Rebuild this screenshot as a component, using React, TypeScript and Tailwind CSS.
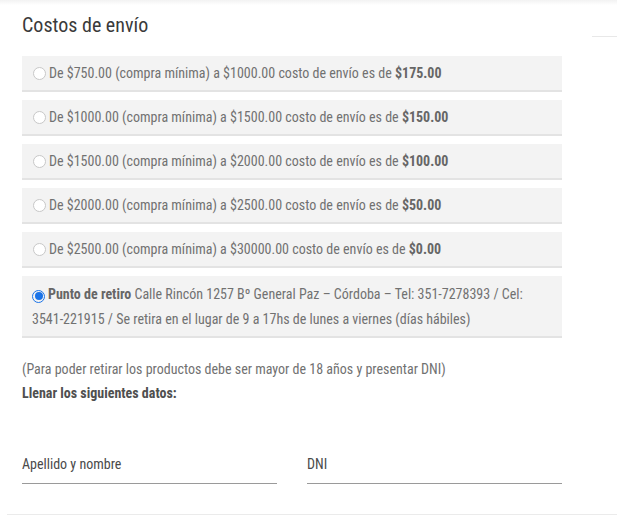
const opciones = [
  { desde: "$750.00", hasta: "$1000.00", costo: "$175.00" },
  { desde: "$1000.00", hasta: "$1500.00", costo: "$150.00" },
  { desde: "$1500.00", hasta: "$2000.00", costo: "$100.00" },
  { desde: "$2000.00", hasta: "$2500.00", costo: "$50.00" },
  { desde: "$2500.00", hasta: "$30000.00", costo: "$0.00" },
];

function Radio({ checked }: { checked?: boolean }) {
  if (checked) {
    return (
      <span className="inline-flex items-center justify-center w-[13px] h-[13px] rounded-full border-[1.5px] border-[#1a73e8] align-[-1px] mr-[3px]">
        <span className="w-[8px] h-[8px] rounded-full bg-[#1a73e8]" />
      </span>
    );
  }
  return (
    <span className="inline-block w-[13px] h-[13px] rounded-full border border-[#c8c8c8] bg-white align-[-1px] mr-[3px]" />
  );
}

export default function App() {
  return (
    <div
      className="relative w-[617px] h-[518px] bg-white text-[#717171] overflow-hidden"
      style={{ fontFamily: "'Roboto Condensed', Roboto, sans-serif" }}
    >
      <div className="absolute inset-x-0 top-0 h-[5px] bg-gradient-to-b from-[#f2f2f2] to-white" />
      <div className="flex">
        <div className="w-[592px] pl-[22px] pr-[30px]">
          <h3 className="text-[20px] leading-[24px] text-[#3a3a3a] pt-[13px]">Costos de envío</h3>
          <div className="mt-[19px] flex flex-col gap-[8px]">
            {opciones.map((o) => (
              <label
                key={o.desde}
                className="flex items-center h-[36px] pl-[11px] bg-[#f3f3f3] border-b-2 border-[#e3e3e3] text-[14px]"
              >
                <Radio />
                <span>
                  De {o.desde} (compra mínima) a {o.hasta} costo de envío es de{" "}
                  <b className="font-bold text-[#666]">{o.costo}</b>
                </span>
              </label>
            ))}
            <label className="block pl-[10px] pr-[8px] pt-[6px] pb-[4px] bg-[#f3f3f3] border-b-2 border-[#e3e3e3] text-[14px] leading-[25px]">
              <Radio checked />
              <b className="font-bold text-[#666]">Punto de retiro</b> Calle Rincón 1257 Bº General Paz – Córdoba – Tel:
              351-7278393 / Cel: 3541-221915 / Se retira en el lugar de 9 a 17hs de lunes a viernes (días hábiles)
            </label>
          </div>
          <p className="mt-[19px] text-[14px] leading-[24px]">
            (Para poder retirar los productos debe ser mayor de 18 años y presentar DNI)
          </p>
          <p className="text-[14px] leading-[24px] font-bold text-[#4f4f4f]">Llenar los siguientes datos:</p>
          <div className="mt-[49px] grid grid-cols-2 gap-[30px]">
            <div className="border-b border-[#9a9a9a] pb-[9px] text-[14px] leading-[20px] text-[#4a4a4a]">
              Apellido y nombre
            </div>
            <div className="border-b border-[#9a9a9a] pb-[9px] text-[14px] leading-[20px] text-[#4a4a4a]">DNI</div>
          </div>
        </div>
        <div className="flex-1 mt-[36px] border-t border-[#e8e8e8] h-0" />
      </div>
      <div className="absolute left-[7px] right-0 top-[514px] border-t border-[#ebebeb]" />
    </div>
  );
}
